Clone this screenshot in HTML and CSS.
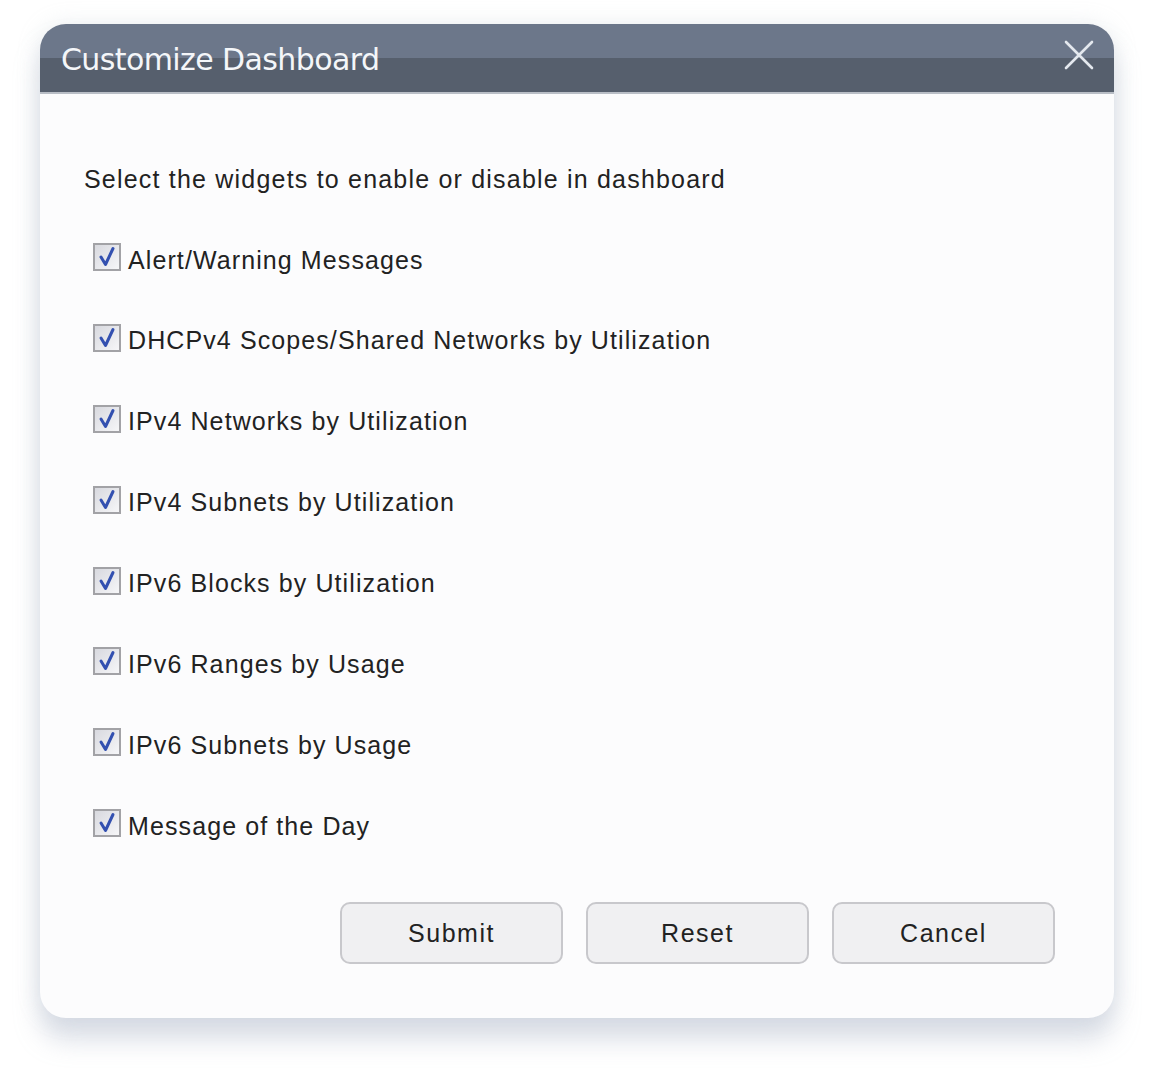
FILE: index.html
```html
<!DOCTYPE html>
<html>
<head>
<meta charset="utf-8">
<link rel="stylesheet" href="styles.css">
</head>
<body>
<div class="dialog">
  <div class="header">
    <span class="title">Customize Dashboard</span>
    <svg class="close" width="30" height="30" viewBox="0 0 30 30"><path d="M2 2 L28 28 M28 2 L2 28" stroke="#e4e8ee" stroke-width="2.6" stroke-linecap="round"/></svg>
  </div>
  <div class="body">
    <p class="intro">Select the widgets to enable or disable in dashboard</p>
    <ul class="list">
      <li class="row"><span class="cb"><svg width="24" height="24" viewBox="0 0 24 24"><path d="M6 12 L10.5 19.5 L18 3.5" fill="none" stroke="#3350b0" stroke-width="3" stroke-linecap="round" stroke-linejoin="round"/></svg></span><span class="label">Alert/Warning Messages</span></li>
      <li class="row"><span class="cb"><svg width="24" height="24" viewBox="0 0 24 24"><path d="M6 12 L10.5 19.5 L18 3.5" fill="none" stroke="#3350b0" stroke-width="3" stroke-linecap="round" stroke-linejoin="round"/></svg></span><span class="label">DHCPv4 Scopes/Shared Networks by Utilization</span></li>
      <li class="row"><span class="cb"><svg width="24" height="24" viewBox="0 0 24 24"><path d="M6 12 L10.5 19.5 L18 3.5" fill="none" stroke="#3350b0" stroke-width="3" stroke-linecap="round" stroke-linejoin="round"/></svg></span><span class="label">IPv4 Networks by Utilization</span></li>
      <li class="row"><span class="cb"><svg width="24" height="24" viewBox="0 0 24 24"><path d="M6 12 L10.5 19.5 L18 3.5" fill="none" stroke="#3350b0" stroke-width="3" stroke-linecap="round" stroke-linejoin="round"/></svg></span><span class="label">IPv4 Subnets by Utilization</span></li>
      <li class="row"><span class="cb"><svg width="24" height="24" viewBox="0 0 24 24"><path d="M6 12 L10.5 19.5 L18 3.5" fill="none" stroke="#3350b0" stroke-width="3" stroke-linecap="round" stroke-linejoin="round"/></svg></span><span class="label">IPv6 Blocks by Utilization</span></li>
      <li class="row"><span class="cb"><svg width="24" height="24" viewBox="0 0 24 24"><path d="M6 12 L10.5 19.5 L18 3.5" fill="none" stroke="#3350b0" stroke-width="3" stroke-linecap="round" stroke-linejoin="round"/></svg></span><span class="label">IPv6 Ranges by Usage</span></li>
      <li class="row"><span class="cb"><svg width="24" height="24" viewBox="0 0 24 24"><path d="M6 12 L10.5 19.5 L18 3.5" fill="none" stroke="#3350b0" stroke-width="3" stroke-linecap="round" stroke-linejoin="round"/></svg></span><span class="label">IPv6 Subnets by Usage</span></li>
      <li class="row"><span class="cb"><svg width="24" height="24" viewBox="0 0 24 24"><path d="M6 12 L10.5 19.5 L18 3.5" fill="none" stroke="#3350b0" stroke-width="3" stroke-linecap="round" stroke-linejoin="round"/></svg></span><span class="label">Message of the Day</span></li>
    </ul>
    <div class="buttons">
      <button class="btn">Submit</button>
      <button class="btn">Reset</button>
      <button class="btn">Cancel</button>
    </div>
  </div>
</div>
</body>
</html>
```

FILE: styles.css
```css
html, body {
  margin: 0;
  padding: 0;
  background: #ffffff;
}
body {
  width: 1154px;
  height: 1074px;
  padding: 24px 40px 0 40px;
  box-sizing: border-box;
  font-family: "Liberation Sans", Arial, sans-serif;
}
.dialog {
  width: 1074px;
  height: 994px;
  background: #fcfcfd;
  border-radius: 26px;
  overflow: hidden;
  box-shadow: 0 22px 26px rgba(160, 172, 192, 0.38), 0 0 22px rgba(180, 190, 205, 0.25);
  display: flex;
  flex-direction: column;
}
.header {
  height: 68px;
  flex: none;
  background: linear-gradient(to bottom, #6c778a 0, #6c778a 34px, #565f6d 34px, #565f6d 100%);
  border-bottom: 2px solid #b9bec6;
  display: flex;
  align-items: center;
  justify-content: space-between;
  padding: 0 20px 0 21px;
}
.title {
  font-family: "DejaVu Sans", "Noto Sans", sans-serif;
  font-size: 30px;
  color: #f4f6f9;
  letter-spacing: -0.6px;
  margin-top: 2px;
}
.close {
  margin-top: -6px;
}
.body {
  padding: 0 44px 0 44px;
  flex: 1;
  display: flex;
  flex-direction: column;
}
.intro {
  margin: 70px 0 0 0;
  font-size: 25px;
  color: #222;
  line-height: 30px;
  letter-spacing: 1.2px;
}
.list {
  list-style: none;
  margin: 51px 0 0 9px;
  padding: 0;
  display: flex;
  flex-direction: column;
  gap: 50.9px;
}
.row {
  display: flex;
  align-items: center;
  height: 30px;
}
.cb {
  width: 24px;
  height: 24px;
  border: 2px solid #a2a2a6;
  background: linear-gradient(to bottom right, #d8d9df, #f6f6f8);
  display: flex;
  align-items: center;
  justify-content: center;
  margin-right: 7px;
  margin-top: -6px;
}
.label {
  font-size: 25px;
  color: #222;
  letter-spacing: 1.1px;
}
.buttons {
  display: flex;
  justify-content: flex-end;
  gap: 23px;
  margin-top: 61px;
  padding-right: 15px;
}
.btn {
  width: 223px;
  height: 62px;
  border: 2px solid #c8c8cc;
  border-radius: 10px;
  background: #f0f0f2;
  font-family: "Liberation Sans", Arial, sans-serif;
  font-size: 25px;
  color: #222;
  letter-spacing: 1.5px;
  padding: 0;
}
```
